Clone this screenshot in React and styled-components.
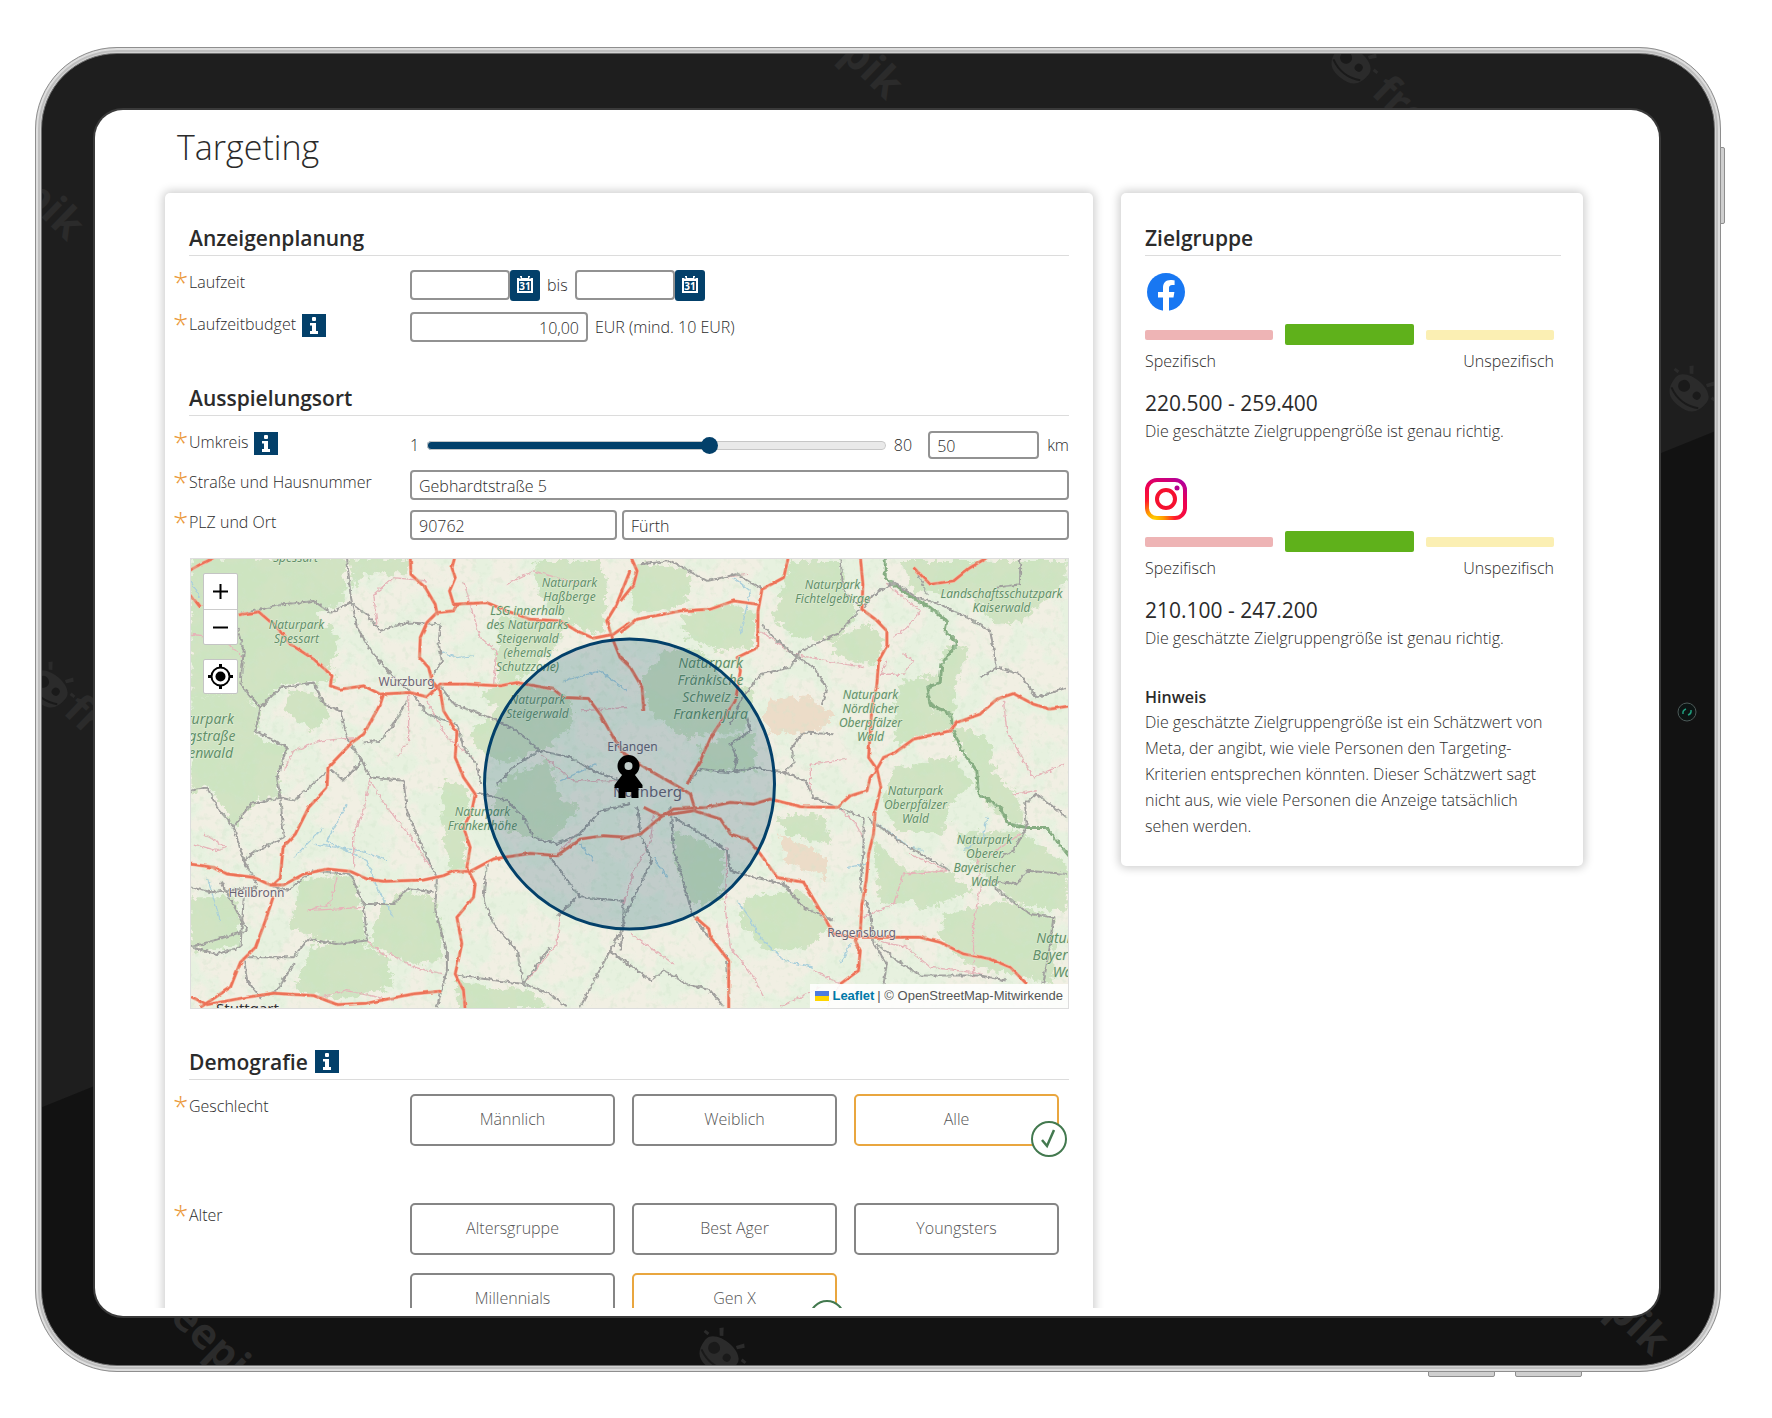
import { useState } from "react";
import styled, { createGlobalStyle } from "styled-components";

const GlobalStyle = createGlobalStyle`
  * {
    box-sizing: border-box;
  }
  body {
    margin: 0;
    background-color: #fff;
    color: #2b2b2b;
    font-family: "Open Sans", "Noto Sans", sans-serif;
    font-size: 16px;
    font-weight: 300;
    line-height: 24px;
  }
  button, input {
    font: inherit;
    color: inherit;
  }
`;

/* Tablet */

const Page = styled.div`
  display: flex;
  height: 100vh;
  min-height: 700px;
  padding: 47px 51px 46px 35px;
`;

const Device = styled.div`
  position: relative;
  display: flex;
  flex: 1;
  min-width: 0;
  padding: 5px;
  border: 1px solid #8e8e8e;
  border-radius: 82px;
  background-color: #d2d2d2;
  box-shadow: inset 0 0 0 2px #dedede, inset 0 0 0 4px #bfbfbf;
`;

const SideButton = styled.span`
  position: absolute;
  top: 99px;
  right: -5px;
  width: 5px;
  height: 77px;
  border: 1px solid #8e8e8e;
  border-radius: 0 2px 2px 0;
  background-color: #cfcfcf;
`;

const BottomButton = styled.span`
  position: absolute;
  right: ${({ $right }) => $right}px;
  bottom: -6px;
  width: 67px;
  height: 6px;
  border: 1px solid #8e8e8e;
  border-radius: 0 0 2px 2px;
  background-color: #cfcfcf;
`;

const Bezel = styled.div`
  position: relative;
  display: flex;
  flex: 1;
  min-width: 0;
  padding: 56px 55px 49px 53px;
  border: 1px solid #6f6f6f;
  border-radius: 76px;
  overflow: hidden;
  background: linear-gradient(158deg, #1e1e1e calc(50% + 55px), #121212 calc(50% + 56px));
`;

const Screen = styled.div`
  position: relative;
  display: flex;
  flex: 1;
  min-width: 0;
  padding-bottom: 8px;
  border-radius: 28px;
  background-color: #fff;
  box-shadow: 0 0 0 2px #3a3a3a;
  overflow: hidden;
`;

const Scroller = styled.main`
  flex: 1;
  min-width: 0;
  overflow-y: auto;
  scrollbar-width: none;
  padding: 13px 76px 40px 70px;
`;

const Camera = styled.svg`
  position: absolute;
  top: 50%;
  right: 17px;
  width: 20px;
  height: 20px;
  margin-top: -8px;
`;

const Mark = styled.svg`
  position: absolute;
  left: ${({ $x }) => $x}%;
  top: ${({ $y }) => $y}%;
  width: 120px;
  height: 120px;
  margin: -60px 0 0 -60px;
  fill: #2b2b2b;
  font: 700 42px "Open Sans", sans-serif;
`;

/* Page parts */

const Title = styled.h1`
  margin: 0 12px 22px;
  font-size: 34px;
  font-weight: 300;
  line-height: 48px;
`;

const Columns = styled.div`
  display: grid;
  grid-template-columns: minmax(0, 1fr) 462px;
  align-items: start;
  gap: 28px;
`;

const Card = styled.section`
  padding: 31px ${({ $right }) => $right || 24}px 27px 24px;
  border-radius: 5px;
  background-color: #fff;
  box-shadow: 0 0 10px 2px rgba(0, 0, 0, 0.2);
`;

const Heading = styled.h2`
  display: flex;
  gap: 7px;
  margin: 0 0 14px;
  padding-bottom: 3px;
  border-bottom: 1px solid #dcdcdc;
  font-size: 21px;
  font-weight: 600;
  line-height: 28px;
`;

const Group = styled.div`
  display: grid;
  gap: ${({ $gap }) => $gap}px;
  margin-bottom: ${({ $after }) => $after}px;
`;

const Row = styled.div`
  display: grid;
  grid-template-columns: 221px minmax(0, 1fr);
  align-items: start;
`;

const Label = styled.label`
  display: flex;
  margin-left: -16px;
`;

const Star = styled.span`
  width: 16px;
  font-size: 28px;
  color: #eb9a3c;
`;

const InfoBox = styled.button`
  width: 24px;
  height: 23px;
  margin: 2px 0 0 ${({ $gap }) => $gap || 0}px;
  padding: 0;
  border: 0;
  background-color: #03406a;
  cursor: pointer;
  svg {
    display: block;
    margin: auto;
  }
`;

const Controls = styled.div`
  display: flex;
  align-items: center;
  height: 30px;
  gap: ${({ $gap }) => $gap || 7}px;
`;

const Field = styled.input`
  flex: ${({ $width }) => ($width ? `0 0 ${$width}px` : "1")};
  min-width: 0;
  height: ${({ $low }) => ($low ? 28 : 30)}px;
  padding: 2px 7px 0;
  border: 2px solid #929292;
  border-radius: 4px;
  background-color: #fff;
  text-align: ${({ $align }) => $align || "left"};
  outline: none;
`;

const DateField = styled.span`
  display: flex;
`;

const DateButton = styled.button`
  width: 30px;
  height: 31px;
  padding: 0;
  border: 0;
  border-radius: 3px;
  background-color: #03406a;
  cursor: pointer;
  svg {
    display: block;
    margin: auto;
  }
`;

const Slider = styled.input`
  flex: 1;
  min-width: 0;
  height: 18px;
  margin: 0;
  appearance: none;
  background: none;
  &::-webkit-slider-runnable-track {
    height: 9px;
    border-radius: 5px;
    background: linear-gradient(#03406a, #03406a) 0 0 / var(--fill) 100% no-repeat, #e9e9e9;
    box-shadow: inset 0 0 0 1px #c6c6c6;
  }
  &::-webkit-slider-thumb {
    appearance: none;
    width: 17px;
    height: 17px;
    margin-top: -4px;
    border-radius: 50%;
    background-color: #03406a;
  }
`;

const SliderEnd = styled.span`
  margin-right: ${({ $after }) => $after || 0}px;
`;

const Choices = styled.div`
  display: grid;
  grid-template-columns: repeat(3, minmax(0, 1fr));
  gap: 18px 17px;
  margin-right: 10px;
`;

const Choice = styled.button`
  position: relative;
  height: 52px;
  padding: 0 0 2px;
  border: 2px solid ${({ $on }) => ($on ? "#e9a63f" : "#858585")};
  border-radius: 5px;
  background-color: #fff;
  color: #555;
  cursor: pointer;
`;

const Tick = styled.svg`
  position: absolute;
  right: -10px;
  bottom: -13px;
  width: 36px;
  height: 36px;
`;

/* Map */

const MapFrame = styled.div`
  position: relative;
  height: 451px;
  margin: 18px 0 39px 1px;
  overflow: hidden;
  border: 1px solid #ddd;
`;

const MapDrawing = styled.svg`
  display: block;
  width: 100%;
  height: 100%;
  font-family: "Noto Sans", sans-serif;
  font-size: 12px;
  font-weight: 400;
`;

const MapTools = styled.div`
  position: absolute;
  top: 14px;
  left: 12px;
  display: grid;
  gap: 14px;
`;

const ToolStack = styled.div`
  display: grid;
  border: 1px solid #c4c4c4;
  border-radius: 2px;
  background-color: #fff;
`;

const Tool = styled.button`
  display: grid;
  place-items: center;
  width: 33px;
  height: ${({ $tall }) => ($tall ? 35 : 33)}px;
  padding: 0;
  border: 0;
  background: none;
  cursor: pointer;
  & + & {
    border-top: 1px solid #ccc;
  }
`;

const Attribution = styled.div`
  position: absolute;
  right: 0;
  bottom: 0;
  display: flex;
  align-items: center;
  gap: 3px;
  height: 24px;
  padding: 0 5px;
  background-color: rgba(255, 255, 255, 0.85);
  color: #555;
  font-family: "Liberation Sans", sans-serif;
  font-size: 13px;
  font-weight: 400;
  a {
    color: #0078a8;
    font-weight: 700;
    text-decoration: none;
  }
`;

/* Audience */

const Network = styled.div`
  margin-bottom: 33px;
  svg {
    display: block;
  }
`;

const Logo = styled.div`
  display: grid;
  align-items: center;
  height: 44px;
  margin-bottom: 10px;
`;

const Scale = styled.div`
  display: grid;
  grid-template-columns: repeat(3, 1fr);
  align-items: center;
  gap: 12px;
  height: 21px;
  margin-right: 7px;
`;

const Bar = styled.span`
  height: ${({ $active }) => ($active ? 21 : 10)}px;
  border-radius: 2px;
  background-color: ${({ $color }) => $color};
`;

const ScaleText = styled.div`
  display: flex;
  justify-content: space-between;
  margin: 4px 7px 15px 0;
`;

const Amount = styled.div`
  font-size: 21px;
  font-weight: 500;
  line-height: 30px;
`;

const Note = styled.p`
  margin: 0;
  line-height: 26px;
`;

const NoteTitle = styled.h3`
  margin: 34px 0 0;
  font-size: 16px;
  font-weight: 600;
  line-height: 24px;
`;

const Info = ({ gap }) => (
  <InfoBox type="button" aria-label="Info" $gap={gap}>
    <svg width="12" height="17" viewBox="0 0 12 17" fill="#fff">
      <rect x="4" y="0" width="4" height="4" rx="1" />
      <path d="M2 6h6v8h2v3H2v-3h2V8.500H2z" />
    </svg>
  </InfoBox>
);

const CalendarButton = () => (
  <DateButton type="button" aria-label="Kalender">
    <svg width="18" height="18" viewBox="0 0 18 18">
      <path d="M2 3h14v13H2z" fill="none" stroke="#fff" strokeWidth="2" />
      <path d="M1 2h16v3H1zM4 0h2v3H4zM12 0h2v3h-2z" fill="#fff" />
      <path d="M4 1v2M14 1v2" stroke="#03406a" strokeWidth="1" />
      <text x="9" y="14" fill="#fff" fontSize="10" fontWeight="700" textAnchor="middle">31</text>
    </svg>
  </DateButton>
);

const Facebook = () => (
  <svg width="42" height="42" viewBox="0 0 42 42">
    <circle cx="21" cy="21" r="19" fill="#1877f2" />
    <path
      fill="#fff"
      d="M18 40V26.500h-5V21h5v-4.300c0-5 3-7.700 7.500-7.700 2.100 0 4.100.4 4.100.4v4.700h-2.400c-2.300 0-3.200 1.400-3.200 3V21h5.400l-.9 5.500H24V40z"
    />
  </svg>
);

const Instagram = () => (
  <svg width="42" height="42" viewBox="0 0 42 42">
    <defs>
      <radialGradient id="insta" cx="0.200" cy="1.050" r="1.350">
        <stop offset="0" stopColor="#ffd600" />
        <stop offset="0.180" stopColor="#ff9a00" />
        <stop offset="0.400" stopColor="#ff1a2c" />
        <stop offset="0.680" stopColor="#ee0050" />
        <stop offset="1" stopColor="#a000b4" />
      </radialGradient>
    </defs>
    <rect x="2" y="2" width="38" height="38" rx="10" fill="none" stroke="url(#insta)" strokeWidth="4" />
    <circle cx="21" cy="21" r="9" fill="none" stroke="#f5102f" strokeWidth="4" />
    <circle cx="32" cy="10" r="2.500" fill="#b4008c" />
  </svg>
);

const Robot = ({ x, y }) => (
  <Mark $x={x} $y={y} viewBox="0 0 120 120" aria-hidden="true">
    <g transform="rotate(38 60 60)">
      <path d="M40 60c0-16 40-16 40 0s-8 20-20 20-20-4-20-20zM44 42l3-3 5 7-3 2zM76 42l-3-3-5 7 3 2zM34 52h5v3h-5zM81 52h5v3h-5z" />
      <circle cx="52" cy="61" r="6" fill="#1a1a1a" />
      <circle cx="68" cy="61" r="4" fill="#1a1a1a" />
      <path d="M43 70q17 9 34 0" stroke="#1a1a1a" strokeWidth="2" fill="none" />
    </g>
  </Mark>
);

const Brand = ({ x, y, children }) => (
  <Mark $x={x} $y={y} viewBox="0 0 120 120" aria-hidden="true">
    <text x="60" y="72" textAnchor="middle" transform="rotate(44 60 60)">{children}</text>
  </Mark>
);

// west half and east half are drawn on their own grids, three units to a pixel
const motorwaysWest = [
  "M30 940L100 950L140 970L220 980L270 1003L310 1003L370 970L440 955L510 962L560 985L610 992L730 988L790 975L820 962L870 962L940 925L1050 908L1130 915L1200 865L1270 855L1350 860",
  "M60 1370L150 1310L180 1235L225 1190L255 1110L278 1040M275 1003L300 980L308 890L345 850L385 770L440 710L443 650L515 575L550 550L600 460L610 430",
  "M175 192L235 183L290 230L330 280L400 325L455 375L450 405L480 415L550 405L600 430L690 425L740 438L780 400L860 400L960 405L1010 395L1120 415L1150 440L1225 443L1260 490L1300 560L1340 620",
  "M690 15L692 70L735 110L765 160L770 185L740 215L720 260L718 320L745 350L755 390L780 420L790 480L830 545L825 620L850 680L885 730L875 780L850 830L870 890L860 950L885 1000L880 1040L830 1100L845 1180L825 1270L850 1320L855 1380",
  "M825 15L815 50L825 80L808 120L820 160L920 155L980 180L1050 205L1140 210L1190 240L1240 262L1300 250L1350 215M770 185L820 180L830 160",
  "M1350 60L1310 160L1280 210L1300 270L1320 320L1350 350",
  "M25 1335L80 1362L200 1340L280 1328L400 1335L470 1362L560 1358L700 1330L780 1322",
  "M25 125L60 170M25 60L60 40L100 20",
];

const motorwaysEast = [
  "M30 15L50 60L40 100L0 150M0 245L50 205L180 180L270 175L340 150L412 160",
  "M505 15L490 80L425 115L413 180L412 290L350 320L360 360L345 450L270 560L240 630L200 700",
  "M0 320L30 350L65 410L70 480M0 600L80 655L160 700L210 730L225 780",
  "M0 865L60 850L120 800L160 775L260 770L330 755L400 760L450 745L540 768L650 770L690 735L740 720L750 680L770 655",
  "M70 770L120 795L220 780L300 805L330 850L380 865L420 910L470 980L550 995L600 1080L640 1150L700 1160",
  "M720 15L728 100L725 175L765 205L800 240L800 285L775 330L770 400L755 470L750 540L745 620L770 655L782 710L765 780L760 850L745 910L738 990L725 1060L720 1150L705 1170L720 1200L715 1260L660 1300",
  "M770 655L790 620L825 605L880 565L990 540L1010 515L1080 490L1130 445L1180 428L1240 460L1290 475L1350 465",
  "M700 1160L900 1160L960 1175L1030 1210L1110 1225L1170 1250L1220 1300",
  "M225 1100L265 1135L270 1160L325 1230L325 1380",
  "M880 50L930 100L1000 90L1050 50L1100 20",
];

const railWest = [
  "M500 20L510 130L530 230L580 310L640 380L700 430L740 490L830 520L850 590L890 640L900 700",
  "M175 190L310 160L400 150L450 185L510 155L560 190L600 240L680 215L780 220L775 280L785 330L760 370",
  "M160 200L190 300L180 400L240 470L300 410L400 395L430 460L480 480L500 560L550 640L570 680L670 690L680 780L740 920L770 980L765 1080L800 1200L800 1260L770 1370",
  "M240 470L225 540L320 590L290 680L300 740L340 750L450 655L490 690L545 630",
  "M30 720L80 710L110 770L160 830L210 760L300 740L310 860L220 905L190 930L230 1000",
  "M160 830L190 930M190 1040L180 1190L110 1210L30 1190M270 1005L320 1020L400 960L510 970L550 1060L560 1170L470 1180L380 1165L340 1220L190 1220L200 1290L240 1340L290 1320L340 1240",
  "M550 1060L640 1060L680 1015L760 1025M920 940L910 1040L940 1120L1010 1200L1030 1300L950 1290L830 1275M1030 1300L1110 1330L1160 1370M1030 1300L1110 1190",
  "M780 405L820 460L930 500L1010 540L1080 600L1170 620L1240 660L1320 690M1080 600L1010 640L950 700",
  "M890 725L980 750L1030 800L1060 860L1130 880L1200 850L1260 780L1350 760M1110 920L1200 1040L1330 1050L1330 1130L1290 1200L1350 1250M1130 1100L1190 1040M1290 1200L1200 1370",
  "M550 575L600 570L640 520L680 450M30 1010L90 1025L230 1010M120 990L200 1140L30 1190",
];

const railEast = [
  "M60 40L150 30L260 90L350 70L425 115M660 20L670 120L725 170L650 250L540 300L510 350L420 370L360 450L330 520",
  "M425 220L460 260L520 310L580 350L620 410L605 460",
  "M725 175L760 130L820 95L890 140L960 160L1060 210L1110 240L1130 350L1200 370L1250 440L1340 410",
  "M890 60L920 130M1200 20L1200 100L1130 110M1130 350L1080 380",
  "M200 700L240 655L330 665L400 650L490 665L555 690L580 740L650 770L730 800L730 900L720 1010L750 1090L760 1180L800 1240L790 1300",
  "M150 770L160 900L185 980L215 1090L250 1140L320 1220L325 1370",
  "M50 770L60 850L95 930L70 980L10 1100L0 1200M160 800L260 860L320 900L330 960L400 980L490 1000L550 1070L640 1110",
  "M340 665L350 620L330 580L390 540L380 500M490 665L520 640L515 590L550 545L640 550",
  "M740 800L850 880L920 920L990 960M1220 830L1180 900L1140 920M1220 830L1215 760L1250 730L1340 800",
  "M770 1180L830 1230L900 1275L1080 1275L1160 1290M1340 970L1220 960L1190 1000L1100 990L1160 1040L1230 1090L1300 1100L1290 1180L1270 1300",
  "M0 1220L90 1290L130 1260L200 1300L270 1320L310 1370",
];

const minorWest = [
  "M590 220L580 130L640 80L740 90M850 90L870 160L900 260L950 300L940 400M980 100L1060 60L1200 100",
  "M685 430L685 570L650 620M530 560L420 570L340 600L310 660M570 680L550 780L520 850L520 950",
  "M570 690L620 770L700 870L750 950M380 1080L550 1070M630 1210L700 1250L790 1270M560 1170L620 1220",
  "M740 450L800 560L880 620M1140 1100L1130 1180L1040 1290M1080 610L1180 690L1320 690M1200 480L1340 470M1130 910L1190 850",
  "M30 250L120 260L190 320M70 850L140 890L110 900L40 880M420 1340L500 1320L640 1350M470 980L450 1060L380 1080",
];

const minorEast = [
  "M300 80L380 70M420 240L520 310L620 330L730 350M800 100L900 180L860 230L820 260M850 310L880 330L850 370L780 370L800 330",
  "M320 890L315 1080L330 1190L400 1280L430 1340M730 1100L820 1060L850 970L990 960M870 910L980 960M1100 920L1200 850",
  "M570 720L570 640L680 625M650 770L700 810L730 860M1150 450L1160 540L1240 680L1330 640M1180 730L1250 720",
  "M1070 900L1080 1010L1060 1120L1060 1280M770 1170L860 1190L930 1250L1090 1270M580 1260L660 1300L620 1370",
  "M100 780L90 870L40 960L10 1060M160 1240L30 1150M480 1370L600 1310",
];

const waterWest = "M80 980L120 1110M430 830L340 920M500 760L440 870L560 930L590 1010L640 1100M780 300L830 320L880 315M1150 390L1260 360L1340 420M30 90L60 140M1250 640L1140 690M1200 880L1240 930M400 880L540 900L620 930";
const waterEast = "M350 1050L380 1090L420 1160L490 1230L580 1250M1100 800L1090 860L1030 900M770 820L870 890L910 900M360 250L390 120L340 80M100 920L140 980M680 950L740 940M660 1240L690 1180";

const forestsWest = [
  "M30 20H500L490 150L400 190L480 260L450 360L400 330L470 390L300 400L240 470L170 430L30 440Z",
  "M30 440L180 430L240 480L230 560L320 590L290 690L300 740L240 740L160 830L90 710L30 720Z",
  "M500 20H690L680 70L560 70L520 110ZM1060 30H1260L1280 100L1270 250L1190 230L1120 180L1070 120Z",
  "M960 190L1150 230L1130 290L1010 390L1180 440L1170 530L1100 590L960 640L880 580L880 540L960 470L900 440L950 400L950 290Z",
  "M960 690L1110 630L1130 730L1200 770L1110 870L1000 850L940 760ZM790 680L870 720L850 820L860 960L810 960L780 800Z",
  "M30 1040H170L180 1190L60 1200L30 1190ZM360 990L520 970L560 1180L470 1180L390 1160L330 1130Z",
  "M400 1180L550 1180L620 1220L640 1310L480 1350L340 1320ZM600 1070L680 1020L760 1040L790 1150L780 1230L700 1240L570 1180Z",
  "M830 1290L930 1310L1050 1320L1100 1375H830ZM330 420L420 430L450 500L400 540L310 480Z",
];

const forestsEast = [
  "M60 40L200 50L210 120L180 170L40 190L30 100ZM180 190L330 160L410 190L400 290L290 300L200 260Z",
  "M130 300L230 290L330 400L400 420L370 540L200 560L100 500L60 400ZM240 580L400 540L410 660H230Z",
  "M510 30L660 30L670 130L720 180L640 270L520 260L460 200ZM650 260L740 220L790 260L770 340L680 330L630 290Z",
  "M840 30H1340V90L1200 210L1130 220L1050 130L880 120ZM850 390L960 370L930 470L1000 540L880 560L830 600L820 460Z",
  "M980 290L1050 290L1010 400L1000 520L1110 570L1120 660L1190 730L1210 820L1160 810L1070 730L1060 640L990 540L920 450L960 370Z",
  "M820 650L1000 620L1060 700L990 760L970 850L830 840L790 760ZM470 800L610 790L630 880L500 850Z",
  "M760 860L850 960L980 960L1060 1020L900 1080L880 1050L780 1060ZM1000 850L1190 840L1340 940V1080L1190 1060L1080 960Z",
  "M970 1090L1150 1050L1300 1100V1300L1040 1240L960 1160ZM370 1040L550 1020L630 1130L560 1190L440 1200L360 1120ZM160 840L310 900L300 1050L210 1060L160 930Z",
];

const border = "M795 20L795 80L860 130L930 170L980 210L975 240L1010 275L965 340L960 395L920 410L930 460L990 490L1000 540L1025 600L1070 660L1075 730L1140 770L1165 820L1220 830L1280 830L1310 870L1350 920";

const parks = [
  { x: 105, y: 3, lines: ["Spessart"] },
  { x: 106, y: 70, lines: ["Naturpark", "Spessart"] },
  { x: 379, y: 28, lines: ["Naturpark", "Haßberge"] },
  { x: 337, y: 56, lines: ["LSG innerhalb", "des Naturparks", "Steigerwald", "(ehemals", "Schutzzone)"] },
  { x: 347, y: 145, lines: ["Naturpark", "Steigerwald"] },
  { x: 292, y: 257, lines: ["Naturpark", "Frankenhöhe"] },
  { x: 642, y: 30, lines: ["Naturpark", "Fichtelgebirge"] },
  { x: 811, y: 39, lines: ["Landschaftsschutzpark", "Kaiserwald"] },
  { x: 680, y: 140, lines: ["Naturpark", "Nördlicher", "Oberpfälzer", "Wald"] },
  { x: 725, y: 236, lines: ["Naturpark", "Oberpfälzer", "Wald"] },
  { x: 794, y: 285, lines: ["Naturpark", "Oberer", "Bayerischer", "Wald"] },
];

const bigParks = [
  { x: 11, y: 165, lines: ["Naturpark", "Bergstraße", "Odenwald"] },
  { x: 520, y: 109, lines: ["Naturpark", "Fränkische", "Schweiz -", "Frankenjura"] },
  { x: 878, y: 384, lines: ["Naturpark", "Bayerischer", "Wald"] },
];

const towns = [
  { x: 216, y: 127, name: "Würzburg" },
  { x: 66, y: 338, name: "Heilbronn" },
  { x: 442, y: 192, name: "Erlangen" },
  { x: 671, y: 378, name: "Regensburg" },
];

const Roads = ({ lines, color, width }) => (
  <g fill="none" stroke={color} strokeWidth={width} strokeLinejoin="round">
    {lines.map((d) => <path key={d} d={d} />)}
  </g>
);

const ParkNames = ({ items, size, step }) => (
  <g fontSize={size} fontStyle="italic" fill="#62906a" textAnchor="middle" stroke="#e3efd8" strokeWidth="1" paintOrder="stroke">
    {items.map(({ x, y, lines }) =>
      lines.map((line, i) => <text key={line + y} x={x} y={y + i * step}>{line}</text>)
    )}
  </g>
);

const Half = ({ x, forests, minor, rail, motorways, water, children }) => (
  <g transform={`translate(${x} -8) scale(0.333)`}>
    <g filter="url(#edge)" fill="#bcdcad" opacity="0.600">
      {forests.map((d) => <path key={d} d={d} />)}
    </g>
    {children}
    <g filter="url(#wiggle)">
      <path d={water} fill="none" stroke="#a9cfdb" strokeWidth="4" />
      <Roads lines={minor} color="#e6b3b8" width={4} />
      <Roads lines={rail} color="#a09f9d" width={6} />
    </g>
    <g filter="url(#bend)">
      <Roads lines={motorways} color="#f7b49e" width={11} />
      <Roads lines={motorways} color="#ec7258" width={7} />
    </g>
  </g>
);

const RegionMap = () => (
  <MapDrawing viewBox="0 0 878 449" preserveAspectRatio="xMidYMid slice" role="img" aria-label="Karte">
    <defs>
      <filter id="land" x="0" y="0" width="100%" height="100%">
        <feTurbulence type="fractalNoise" baseFrequency="0.030" numOctaves="5" seed="8" />
        <feColorMatrix values="0 0 0 0 0.780  0 0 0 0 0.890  0 0 0 0 0.740  6 0 0 0 -2.600" />
      </filter>
      <filter id="speck" x="0" y="0" width="100%" height="100%">
        <feTurbulence type="fractalNoise" baseFrequency="0.160" numOctaves="3" seed="3" />
        <feColorMatrix values="0 0 0 0 0.630  0 0 0 0 0.780  0 0 0 0 0.600  5 0 0 0 -2.700" />
      </filter>
      <filter id="edge">
        <feTurbulence type="fractalNoise" baseFrequency="0.050" numOctaves="5" seed="5" />
        <feDisplacementMap in="SourceGraphic" scale="42" xChannelSelector="R" yChannelSelector="G" />
      </filter>
      <filter id="wiggle">
        <feTurbulence type="fractalNoise" baseFrequency="0.080" numOctaves="2" seed="2" />
        <feDisplacementMap in="SourceGraphic" scale="14" xChannelSelector="R" yChannelSelector="G" />
      </filter>
      <filter id="bend">
        <feTurbulence type="fractalNoise" baseFrequency="0.040" numOctaves="2" seed="9" />
        <feDisplacementMap in="SourceGraphic" scale="8" xChannelSelector="R" yChannelSelector="G" />
      </filter>
    </defs>
    <rect width="878" height="449" fill="#f1efe3" />
    <rect width="878" height="449" filter="url(#land)" opacity="0.800" />
    <Half x={-10} forests={forestsWest} minor={minorWest} rail={railWest} motorways={motorwaysWest} water={waterWest} />
    <Half x={430} forests={forestsEast} minor={minorEast} rail={railEast} motorways={motorwaysEast} water={waterEast}>
      <path d="M450 450L560 435L640 490L600 540L450 550L430 500ZM480 850L620 920V980L500 940Z" fill="#ecdcc8" filter="url(#edge)" />
      <path d={border} fill="none" stroke="#86ad82" strokeWidth="9" filter="url(#wiggle)" />
    </Half>
    <rect width="878" height="449" filter="url(#speck)" opacity="0.300" />
    <ParkNames items={parks} size={12} step={14} />
    <ParkNames items={bigParks} size={14} step={17} />
    <g fill="#6a6472" textAnchor="middle" stroke="#f4f0ea" strokeWidth="1" paintOrder="stroke">
      {towns.map(({ x, y, name }) => <text key={name} x={x} y={y}>{name}</text>)}
      <text x="457" y="238" fontSize="15">Nürnberg</text>
      <text x="57" y="455" fontSize="15" fill="#333">Stuttgart</text>
    </g>
    <circle cx="439" cy="225" r="145" fill="#03406a" fillOpacity="0.200" stroke="#03406a" strokeWidth="3" />
    <g>
      <circle cx="438" cy="207" r="7.500" fill="none" stroke="#000" strokeWidth="7" />
      <path d="M433 214h10l9 12v3h-4v10h-7v-6h-6v6h-7v-10h-4v-3z" />
    </g>
  </MapDrawing>
);

const ChoiceButton = ({ label, on, onClick }) => (
  <Choice type="button" $on={on} aria-pressed={on} onClick={onClick}>
    {label}
    {on && (
      <Tick viewBox="0 0 36 36" fill="none" stroke="#43794f">
        <circle cx="18" cy="18" r="17" fill="#fff" strokeWidth="2" />
        <path d="M11 19l5 6l7-16" strokeWidth="2.500" />
      </Tick>
    )}
  </Choice>
);

const Required = ({ htmlFor, children }) => (
  <Label htmlFor={htmlFor}>
    <Star aria-hidden="true">*</Star>
    {children}
  </Label>
);

const Audience = ({ logo, amount }) => (
  <Network>
    <Logo>{logo}</Logo>
    <Scale>
      <Bar $color="#eeb4b5" />
      <Bar $color="#5fb11b" $active />
      <Bar $color="#fbefb3" />
    </Scale>
    <ScaleText>
      <span>Spezifisch</span>
      <span>Unspezifisch</span>
    </ScaleText>
    <Amount>{amount}</Amount>
    <Note>Die geschätzte Zielgruppengröße ist genau richtig.</Note>
  </Network>
);

const genders = ["Männlich", "Weiblich", "Alle"];
const ages = ["Altersgruppe", "Best Ager", "Youngsters", "Millennials", "Gen X"];

export default function App() {
  const [radius, setRadius] = useState(50);
  const [gender, setGender] = useState("Alle");
  const [age, setAge] = useState("Gen X");
  const fill = `${((radius - 1) / 79) * 100}%`;

  return (
    <Page>
      <GlobalStyle />
      <Device>
        <SideButton />
        <BottomButton $right={225} />
        <BottomButton $right={138} />
        <Bezel>
          <Brand x={49.6} y={1.2}>pik</Brand>
          <Robot x={78.4} y={0.6} />
          <Brand x={81.2} y={4}>fre</Brand>
          <Brand x={0.6} y={12}>pik</Brand>
          <Robot x={0.5} y={48.2} />
          <Brand x={3} y={51.2}>fre</Brand>
          <Robot x={98.6} y={25.6} />
          <Brand x={10} y={98.2}>eepi</Brand>
          <Robot x={40.6} y={99} />
          <Brand x={95.4} y={97}>pik</Brand>
          <Camera viewBox="0 0 20 20" fill="none">
            <circle cx="10" cy="10" r="9" fill="#0c1413" stroke="#4c5a58" />
            <path d="M6 12a4.500 4.500 0 0 1 3-5M14 8a4.500 4.500 0 0 1-3 5" stroke="#1f9c7c" strokeWidth="1.500" />
          </Camera>
          <Screen>
            <Scroller>
              <Title>Targeting</Title>
              <Columns>
                <Card>
                  <Heading>Anzeigenplanung</Heading>
                  <Group $gap={12} $after={42}>
                    <Row>
                      <Required htmlFor="from">Laufzeit</Required>
                      <Controls>
                        <DateField>
                          <Field id="from" $width={100} />
                          <CalendarButton />
                        </DateField>
                        <label htmlFor="to">bis</label>
                        <DateField>
                          <Field id="to" $width={100} />
                          <CalendarButton />
                        </DateField>
                      </Controls>
                    </Row>
                    <Row>
                      <Required htmlFor="budget">
                        Laufzeitbudget <Info gap={6} />
                      </Required>
                      <Controls>
                        <Field id="budget" $width={178} $align="right" defaultValue="10,00" />
                        <span>EUR (mind. 10 EUR)</span>
                      </Controls>
                    </Row>
                  </Group>

                  <Heading>Ausspielungsort</Heading>
                  <Group $gap={10} $after={0}>
                    <Row>
                      <Required htmlFor="radius">
                        Umkreis <Info gap={6} />
                      </Required>
                      <Controls $gap={8}>
                        <SliderEnd>1</SliderEnd>
                        <Slider
                          id="radius"
                          type="range"
                          min="1"
                          max="80"
                          value={radius}
                          style={{ "--fill": fill }}
                          onChange={(e) => setRadius(Number(e.target.value))}
                        />
                        <SliderEnd $after={8}>80</SliderEnd>
                        <Field
                          aria-label="Umkreis in km"
                          $width={111}
                          $low
                          value={radius}
                          onChange={(e) => setRadius(Number(e.target.value) || 1)}
                        />
                        <span>km</span>
                      </Controls>
                    </Row>
                    <Row>
                      <Required htmlFor="street">Straße und Hausnummer</Required>
                      <Controls>
                        <Field id="street" defaultValue="Gebhardtstraße 5" />
                      </Controls>
                    </Row>
                    <Row>
                      <Required htmlFor="zip">PLZ und Ort</Required>
                      <Controls $gap={5}>
                        <Field id="zip" $width={207} defaultValue="90762" />
                        <Field aria-label="Ort" defaultValue="Fürth" />
                      </Controls>
                    </Row>
                  </Group>

                  <MapFrame>
                    <RegionMap />
                    <MapTools>
                      <ToolStack>
                        <Tool type="button" aria-label="Vergrößern" $tall>
                          <svg width="15" height="15" viewBox="0 0 15 15" stroke="#000" strokeWidth="2">
                            <path d="M0 7.500h15M7.500 0v15" />
                          </svg>
                        </Tool>
                        <Tool type="button" aria-label="Verkleinern" $tall>
                          <svg width="15" height="15" viewBox="0 0 15 15" stroke="#000" strokeWidth="2">
                            <path d="M0 7.500h15" />
                          </svg>
                        </Tool>
                      </ToolStack>
                      <ToolStack>
                        <Tool type="button" aria-label="Standort">
                          <svg width="25" height="25" viewBox="0 0 25 25">
                            <circle cx="12.500" cy="12.500" r="9" fill="none" stroke="#000" strokeWidth="2" />
                            <circle cx="12.500" cy="12.500" r="5" />
                            <path d="M12.500 0v4M12.500 21v4M0 12.500h4M21 12.500h4" stroke="#000" strokeWidth="3" />
                          </svg>
                        </Tool>
                      </ToolStack>
                    </MapTools>
                    <Attribution>
                      <svg width="14" height="10" viewBox="0 0 14 10">
                        <path d="M0 0h14v5H0z" fill="#4c7be1" />
                        <path d="M0 5h14v5H0z" fill="#ffd500" />
                      </svg>
                      <a href="#leaflet">Leaflet</a>
                      <span>| © OpenStreetMap-Mitwirkende</span>
                    </Attribution>
                  </MapFrame>

                  <Heading>
                    Demografie <Info />
                  </Heading>
                  <Group $gap={57} $after={0}>
                    <Row>
                      <Required>Geschlecht</Required>
                      <Choices>
                        {genders.map((name) => (
                          <ChoiceButton key={name} label={name} on={gender === name} onClick={() => setGender(name)} />
                        ))}
                      </Choices>
                    </Row>
                    <Row>
                      <Required>Alter</Required>
                      <Choices>
                        {ages.map((name) => (
                          <ChoiceButton key={name} label={name} on={age === name} onClick={() => setAge(name)} />
                        ))}
                      </Choices>
                    </Row>
                  </Group>
                </Card>

                <Card $right={22}>
                  <Heading>Zielgruppe</Heading>
                  <Audience logo={<Facebook />} amount="220.500 - 259.400" />
                  <Audience logo={<Instagram />} amount="210.100 - 247.200" />
                  <NoteTitle>Hinweis</NoteTitle>
                  <Note>
                    Die geschätzte Zielgruppengröße ist ein Schätzwert von Meta, der angibt, wie viele Personen den
                    Targeting-Kriterien entsprechen könnten. Dieser Schätzwert sagt nicht aus, wie viele Personen die
                    Anzeige tatsächlich sehen werden.
                  </Note>
                </Card>
              </Columns>
            </Scroller>
          </Screen>
        </Bezel>
      </Device>
    </Page>
  );
}
